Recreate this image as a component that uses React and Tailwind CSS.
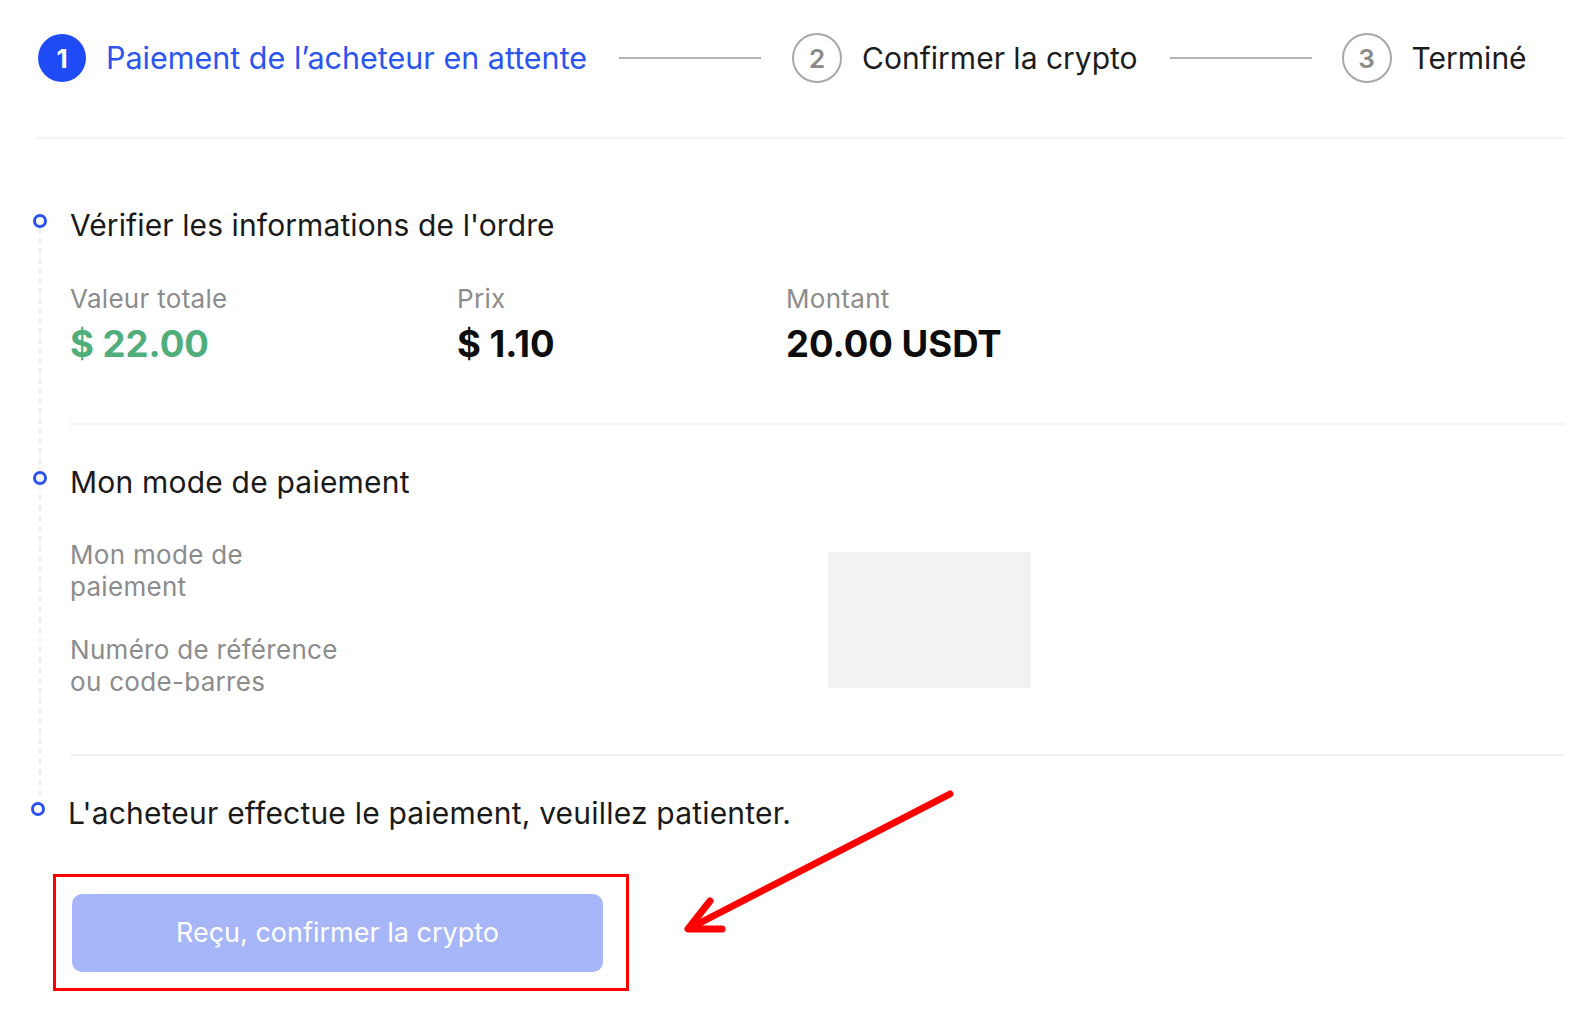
import React from "react";

function Dot() {
  return <div className="w-[14px] h-[14px] rounded-full border-[3px] border-[#2a52f2] bg-white shrink-0" />;
}

function Section({ last, children }) {
  return (
    <div className="flex">
      <div className="w-[33px] shrink-0 flex flex-col items-start -ml-[4px] mr-[4px]">
        <div className="mt-[7px]"><Dot /></div>
        {!last && <div className="flex-1 ml-[6px] border-l-2 border-dashed border-[#ededed]" />}
      </div>
      <div className="flex-1 min-w-0">{children}</div>
    </div>
  );
}

export default function App() {
  return (
    <div className="relative w-[1572px] h-[1024px] bg-white overflow-hidden" style={{ fontFamily: "Inter, 'Noto Sans', sans-serif" }}>
      <div className="pl-[37px] pr-[7px]">
        {/* Stepper */}
        <div className="flex items-center pt-[33px] pb-[54px] pl-[1px] border-b-2 border-[#f3f3f3]">
          <div className="w-[48px] h-[48px] rounded-full bg-[#1e4bf6] flex items-center justify-center text-white text-[26px] font-bold">1</div>
          <div className="ml-[20px] text-[30.5px] leading-[36px] text-[#2b55ee]">Paiement de l’acheteur en attente</div>
          <div className="ml-[32px] w-[142px] h-[2px] bg-[#b4b4b4]" />
          <div className="ml-[31px] w-[50px] h-[50px] rounded-full border-2 border-[#a8a8a8] flex items-center justify-center text-[#8a8a8a] text-[26px] font-semibold">2</div>
          <div className="ml-[20px] text-[30px] leading-[36px] text-[#1c1c1c]">Confirmer la crypto</div>
          <div className="ml-[32px] w-[142px] h-[2px] bg-[#b4b4b4]" />
          <div className="ml-[30px] w-[50px] h-[50px] rounded-full border-2 border-[#a8a8a8] flex items-center justify-center text-[#8a8a8a] text-[26px] font-semibold">3</div>
          <div className="ml-[20px] text-[30px] leading-[36px] text-[#1c1c1c]">Terminé</div>
        </div>

        <div className="pt-[68px]">
          {/* Section 1 */}
          <Section>
            <div className="text-[30px] leading-[36px] text-[#1a1a1a] tracking-[0.1px]">Vérifier les informations de l'ordre</div>
            <div className="grid grid-cols-[387px_329px_auto] mt-[40px]">
              <div>
                <div className="text-[26px] leading-[32px] text-[#8c8c8c] tracking-[0.3px]">Valeur totale</div>
                <div className="mt-[7px] text-[36.5px] leading-[44px] font-bold text-[#4fae7b]">$ 22.00</div>
              </div>
              <div>
                <div className="text-[26px] leading-[32px] text-[#8c8c8c] tracking-[0.3px]">Prix</div>
                <div className="mt-[7px] text-[36.5px] leading-[44px] font-bold text-[#0d0d0d]">$ 1.10</div>
              </div>
              <div>
                <div className="text-[26px] leading-[32px] text-[#8c8c8c] tracking-[0.3px]">Montant</div>
                <div className="mt-[7px] text-[36.5px] leading-[44px] font-bold text-[#0d0d0d]">20.00 USDT</div>
              </div>
            </div>
            <div className="mt-[57px] h-[2px] bg-[#f3f3f3]" />
            <div className="h-[39px]" />
          </Section>

          {/* Section 2 */}
          <Section>
            <div className="text-[30px] leading-[36px] text-[#1a1a1a] tracking-[0.2px]">Mon mode de paiement</div>
            <div className="grid grid-cols-[758px_auto] mt-[39px]">
              <div className="flex flex-col gap-[31px]">
                <div className="text-[26px] leading-[32px] text-[#8c8c8c] tracking-[0.3px] w-[340px]">Mon mode de<br />paiement</div>
                <div className="text-[26px] leading-[32px] text-[#8c8c8c] tracking-[0.3px] w-[340px]">Numéro de référence<br />ou code-barres</div>
              </div>
              <div className="mt-[13px] w-[203px] h-[136px] bg-[#f2f2f2]" />
            </div>
            <div className="mt-[56px] h-[2px] bg-[#f3f3f3]" />
            <div className="h-[39px]" />
          </Section>

          {/* Section 3 */}
          <div className="flex -ml-[2px]">
            <div className="w-[33px] shrink-0 -ml-[4px] mr-[4px]">
              <div className="mt-[7px]"><Dot /></div>
            </div>
            <div>
              <div className="text-[30px] leading-[36px] text-[#1a1a1a] tracking-[0.2px]">L'acheteur effectue le paiement, veuillez patienter.</div>
              <div className="relative mt-[63px] ml-[4px] w-[531px]">
                <button className="w-[531px] h-[78px] rounded-[10px] bg-[#a6b6f8] text-white text-[27px] flex items-center justify-center">Reçu, confirmer la crypto</button>
                <div className="absolute -left-[19px] -top-[20px] w-[576px] h-[117px] border-[3px] border-[#ff0000] pointer-events-none" />
              </div>
            </div>
          </div>
        </div>
      </div>

      {/* Arrow annotation */}
      <svg className="absolute left-0 top-0 pointer-events-none" width="1572" height="1024" viewBox="0 0 1572 1024">
        <g stroke="#ff0000" strokeWidth="7" strokeLinecap="round" strokeLinejoin="round" fill="none">
          <line x1="950" y1="794" x2="690" y2="928" />
          <polyline points="710,901 688,929 722,929" />
        </g>
      </svg>
    </div>
  );
}
